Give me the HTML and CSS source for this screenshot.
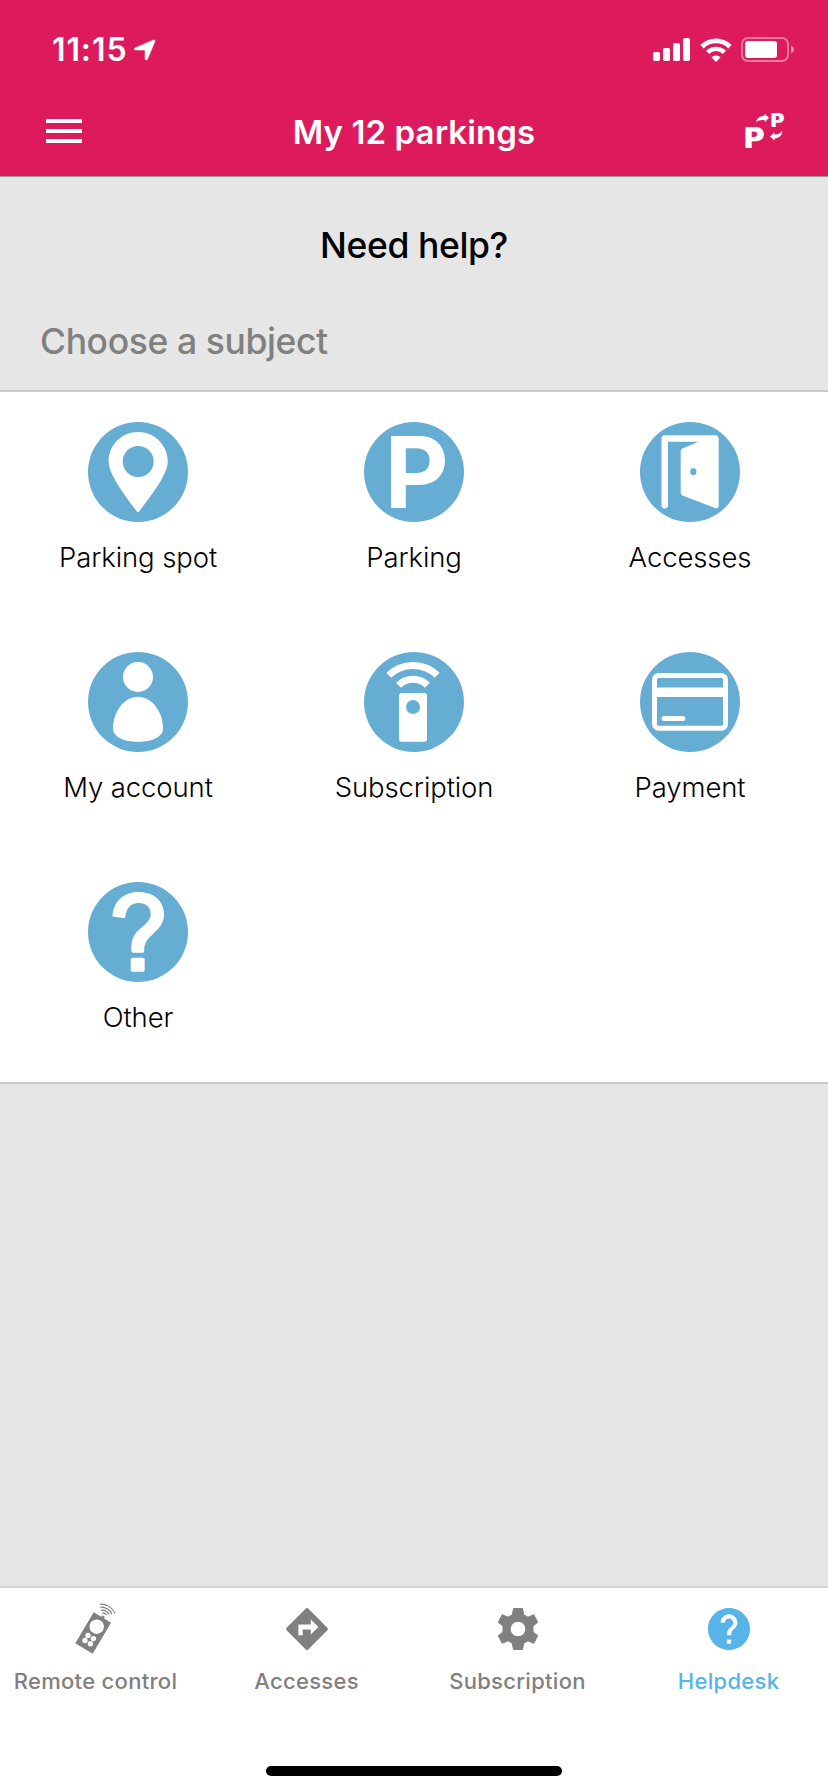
FILE: index.html
```html
<!DOCTYPE html>
<html lang="en">
<head>
<meta charset="utf-8">
<title>Helpdesk</title>
<link rel="stylesheet" href="styles.css">
</head>
<body>
<div class="app">
  <header class="header">
    <div class="status">
      <div class="status-left">
        <span class="time">11:15</span>
        <svg class="location" width="22" height="22" viewBox="0 0 22 22"><path d="M1.2 8.900 19.300 1.100c1.200-.5 2 .3 1.500 1.500L13.400 20.200c-.5 1.200-2.300 1-2.300-.4V11.600c0-.4-.2-.6-.6-.6H1.600C.1 11-.1 9.500 1.200 8.900z" stroke="#fff" stroke-width=".6"/></svg>
      </div>
      <div class="status-right">
        <svg width="37" height="23" viewBox="0 0 37 23"><rect x="0" y="14" width="7" height="9" rx="1.700"/><rect x="10" y="10" width="7" height="13" rx="1.700"/><rect x="20" y="5" width="7" height="18" rx="1.700"/><rect x="30" y="0" width="7" height="23" rx="1.700"/></svg>
        <svg class="wifi" width="32" height="24" viewBox="0 0 32 24"><path d="M2 8.700a19.800 19.800 0 0 1 28 0" fill="none" stroke="#fff" stroke-width="4.800"/><path d="M7.600 14.400a11.800 11.800 0 0 1 16.800 0" fill="none" stroke="#fff" stroke-width="4.400"/><path d="M11.400 19.200a6.800 6.800 0 0 1 9.200 0L16 24z"/></svg>
        <svg class="battery" width="53" height="25" viewBox="0 0 53 25"><rect x="1" y="1" width="46" height="23" rx="6" fill="none" stroke="#fff" stroke-opacity=".42" stroke-width="2"/><rect x="4" y="4" width="32" height="17" rx="3"/><path d="M50 8.500c4 1.500 4 6.500 0 8z" fill-opacity=".5"/></svg>
      </div>
    </div>
    <div class="nav">
      <div class="burger"><i></i><i></i><i></i></div>
      <h1 class="title">My 12 parkings</h1>
      <svg class="swap" width="40" height="36" viewBox="0 0 40 36">
        <text class="swap-p" transform="translate(-1.100 34.800) scale(1.120 1)" font-size="28">P</text>
        <text class="swap-p" transform="translate(25.500 13.800) scale(1.150 1)" font-size="18.500">P</text>
        <path d="M11 9.500C11.500 5.500 15 2.700 19.700 2.700V.6L24 5.100 19.700 9.300V7C16 6.700 13 7.200 11 9.500z"/>
        <path d="M37.200 17.500C37.500 21.500 34.500 25.300 29.500 25.400V27.600L25 23.500 29.300 19.500V21.500C32.700 21.800 35.500 20.500 37.200 17.500z"/>
      </svg>
    </div>
  </header>

  <main class="content">
    <h2 class="question">Need help?</h2>
    <p class="choose">Choose a subject</p>
    <section class="subjects">
      <div class="subject">
        <svg class="disc" viewBox="0 0 100 100"><circle class="blue" cx="50" cy="50" r="50"/><path d="M50 10C33.500 10 20.600 23 20.600 39.500 20.600 54 42 80 48.700 89.300Q50 91 51.300 89.300C58 80 79.800 54 79.800 39.500 79.800 23 66.500 10 50 10z"/><circle class="blue" cx="50.200" cy="39.500" r="15.500"/></svg>
        <span class="label">Parking spot</span>
      </div>
      <div class="subject">
        <svg class="disc" viewBox="0 0 100 100"><circle class="blue" cx="50" cy="50" r="50"/><text class="disc-p" transform="translate(20.500 86)">P</text></svg>
        <span class="label">Parking</span>
      </div>
      <div class="subject">
        <svg class="disc" viewBox="0 0 100 100"><circle class="blue" cx="50" cy="50" r="50"/><path d="M24.700 83.200V16.500H75" fill="none" stroke="#fff" stroke-width="6.400" stroke-linecap="round" stroke-linejoin="round"/><path d="M60 19V14H76Q78.700 14 78.700 17V83.500Q78.700 87 75 86L42.500 73.500Q40.700 72.500 40.700 70.500V29.500Q40.700 27.300 42.500 26.500z"/><ellipse class="blue" cx="53.300" cy="49.700" rx="3.100" ry="3.400"/></svg>
        <span class="label">Accesses</span>
      </div>
      <div class="subject">
        <svg class="disc" viewBox="0 0 100 100"><circle class="blue" cx="50" cy="50" r="50"/><circle cx="50" cy="25" r="15"/><path d="M50 44.700C36 44.700 25 60 25 76.500 25 85 36 89.800 50 89.800S75 85 75 76.500C75 60 64 44.700 50 44.700z"/></svg>
        <span class="label">My account</span>
      </div>
      <div class="subject">
        <svg class="disc" viewBox="0 0 100 100"><circle class="blue" cx="50" cy="50" r="50"/><rect x="35" y="41" width="28" height="48.800" rx="2.800"/><circle class="blue" cx="49" cy="55" r="7"/><path d="M24.800 23.300a34.800 34.800 0 0 1 48.400 0M34.600 33.300a20 20 0 0 1 28.800 0" fill="none" stroke="#fff" stroke-width="7"/></svg>
        <span class="label">Subscription</span>
      </div>
      <div class="subject">
        <svg class="disc" viewBox="0 0 100 100"><circle class="blue" cx="50" cy="50" r="50"/><rect x="14.500" y="23.500" width="71" height="52.700" rx="4" fill="none" stroke="#fff" stroke-width="5"/><path d="M14 35.600H86V45H14z"/><rect x="21.600" y="64" width="23.800" height="5" rx="2.500"/></svg>
        <span class="label">Payment</span>
      </div>
      <div class="subject">
        <svg class="disc" viewBox="0 0 100 100"><circle class="blue" cx="50" cy="50" r="50"/><path d="M25.700 34.800C24.600 34.700 24.300 34 24.500 32.500 26.500 17.500 37 10 50.500 10 66 10 76 19 76 32.500 76 40 72 45.500 66.500 50.500 60 56.500 56.200 60 56.200 68 56.200 70 55.800 70.800 54 70.800H46C44.200 70.800 43.400 70 43.400 68.500 43.400 62 43.200 57.500 47.500 51.500 53.500 44 62.700 40.500 62.700 32.500 62.700 25.500 58.500 21 50.500 21 43 21 38.500 26 37.500 34 37.300 35.800 36.800 36.300 35 36z"/><rect x="42.700" y="75.700" width="14" height="14" rx="1.800"/></svg>
        <span class="label">Other</span>
      </div>
    </section>
  </main>

  <nav class="tabbar">
    <div class="tabs">
      <div class="tab">
        <svg width="42" height="52" viewBox="0 0 42 52"><path class="grey" d="M18.700 9.300 26.200 13.800 27.200 12.200 30 13.900 29 15.500 36 19.700 17.700 50.700.3 40.300z"/><circle cx="21.700" cy="23.700" r="7.200"/><circle cx="13" cy="32.400" r="2.700"/><circle cx="18.400" cy="35.600" r="2.700"/><circle cx="10" cy="37.500" r="2.700"/><circle cx="15.400" cy="40.700" r="2.700"/><path d="M25 1.200C31.500.8 37.500 4.300 40 10.500M25.300 4.200C30 3.800 35 6.500 37 11M26 7.200C29 6.900 32.500 8.500 34.200 11.500M27 10C28.500 9.700 30.700 10.500 31.700 12" fill="none" stroke="#808080" stroke-width="1.100"/></svg>
        <span class="tab-label">Remote control</span>
      </div>
      <div class="tab">
        <svg width="42" height="52" viewBox="0 -5 42 52"><path class="grey" d="M19.800.6Q21-.5 22.200.6L41.400 19.800Q42.500 21 41.400 22.200L22.200 41.400Q21 42.500 19.800 41.400L.6 22.200Q-.5 21 .6 19.800z"/><path d="M12.400 27.200V16.400H24.800V11.500L32.400 19 24.800 26.500V21.400H16.700V27.200z"/></svg>
        <span class="tab-label">Accesses</span>
      </div>
      <div class="tab">
        <svg width="42" height="52" viewBox="0 -5 42 52"><path class="grey" stroke="#808080" stroke-linejoin="round" d="M16.500.5H25.500L26.700 6.800 31 9.200 36.800 6.700 40.700 14.300 36 18V24L40.700 27.700 36.800 35.300 31 32.800 26.700 35.200 25.500 41.500H16.500L15.300 35.200 11 32.800 5.200 35.300 1.300 27.700 6 24V18L1.300 14.300 5.200 6.700 11 9.200 15.300 6.800z"/><circle cx="21" cy="21" r="7.300"/></svg>
        <span class="tab-label">Subscription</span>
      </div>
      <div class="tab active">
        <svg width="42" height="52" viewBox="2 -.38 20 24.760"><path class="sky" d="M12 2C6.480 2 2 6.480 2 12s4.480 10 10 10 10-4.480 10-10S17.520 2 12 2zm1 17h-2v-2h2v2zm2.070-7.750l-.9.920C13.450 12.900 13 13.500 13 15h-2v-.5c0-1.100.450-2.100 1.170-2.830l1.240-1.260c.370-.360.590-.860.590-1.410 0-1.100-.9-2-2-2s-2 .9-2 2H8c0-2.210 1.790-4 4-4s4 1.790 4 4c0 .880-.360 1.680-.930 2.250z"/></svg>
        <span class="tab-label">Helpdesk</span>
      </div>
    </div>
    <div class="home"></div>
  </nav>
</div>
</body>
</html>
```
FILE: styles.css
```css
* { box-sizing: border-box; }

body {
  margin: 0;
  font-family: Inter, "Liberation Sans", sans-serif;
  color: #000;
}

svg { display: block; fill: #fff; overflow: visible; }
.blue { fill: #66add4; }
.grey { fill: #808080; }
.sky { fill: #56b4e8; }

.app {
  width: 828px;
  height: 1792px;
  display: flex;
  flex-direction: column;
  background: #e6e6e6;
  overflow: hidden;
}

.header {
  height: 177px;
  background: #dc1a5c;
  border-bottom: 1px solid #999;
  color: #fff;
}

.status {
  height: 88px;
  padding: 30px 34px 0 52px;
  display: flex;
  justify-content: space-between;
}

.status-left { display: flex; gap: 8px; }
.time { width: 74px; font-size: 32px; line-height: 40px; font-weight: 560; letter-spacing: 0.9px; white-space: nowrap; }
.location { margin-top: 9px; }
.status-right { display: flex; padding-top: 8px; }
.wifi { margin-left: 10px; }
.battery { margin: -1px 0 0 9px; }

.nav {
  height: 88px;
  padding: 0 39px 0 46px;
  display: grid;
  grid-template-columns: 40px 1fr 44px;
  align-items: center;
}

.burger { width: 36px; display: grid; gap: 6px; margin-top: -2px; }
.burger i { height: 4px; background: #fff; }
.title { margin: 0 3px 0 0; font-size: 33px; line-height: 40px; font-weight: 560; letter-spacing: 0.1px; text-align: center; }
.swap { margin-top: -3px; }
.swap-p { font-weight: 900; }
.disc-p { font-size: 99px; font-weight: 700; }

.content { flex: 1; }

.question {
  margin: 45px 0 0;
  text-align: center;
  font-size: 35.5px;
  line-height: 48px;
  font-weight: 480;
  letter-spacing: -0.4px;
}

.choose {
  margin: 48px 0 24px 40px;
  font-size: 35.5px;
  line-height: 48px;
  font-weight: 460;
  letter-spacing: -0.4px;
  color: #808080;
}

.subjects {
  height: 694px;
  display: grid;
  grid-template-columns: repeat(3, 1fr);
  grid-auto-rows: 230px;
  background: #fff;
  border-top: 2px solid #c8c8c8;
  border-bottom: 2px solid #c8c8c8;
}

.subject {
  display: flex;
  flex-direction: column;
  align-items: center;
  gap: 16px;
  padding-top: 30px;
}

.disc { width: 100px; height: 100px; }
.label { font-size: 27.5px; line-height: 38px; font-weight: 300; letter-spacing: -0.1px; white-space: nowrap; }

.tabbar {
  height: 206px;
  background: #fff;
  border-top: 2px solid #d4d4d4;
  display: flex;
  flex-direction: column;
  align-items: center;
}

.tabs {
  width: 844px;
  height: 178px;
  margin-left: -10px;
  align-self: flex-start;
  display: grid;
  grid-template-columns: repeat(4, 1fr);
}

.tab {
  display: flex;
  flex-direction: column;
  align-items: center;
  padding-top: 15px;
  gap: 11px;
  color: #808080;
}

.tab-label { font-size: 22px; line-height: 30px; font-weight: 450; letter-spacing: 0.3px; white-space: nowrap; }
.active { color: #56b4e8; }

.home { width: 296px; height: 10px; border-radius: 5px; background: #000; }
```
